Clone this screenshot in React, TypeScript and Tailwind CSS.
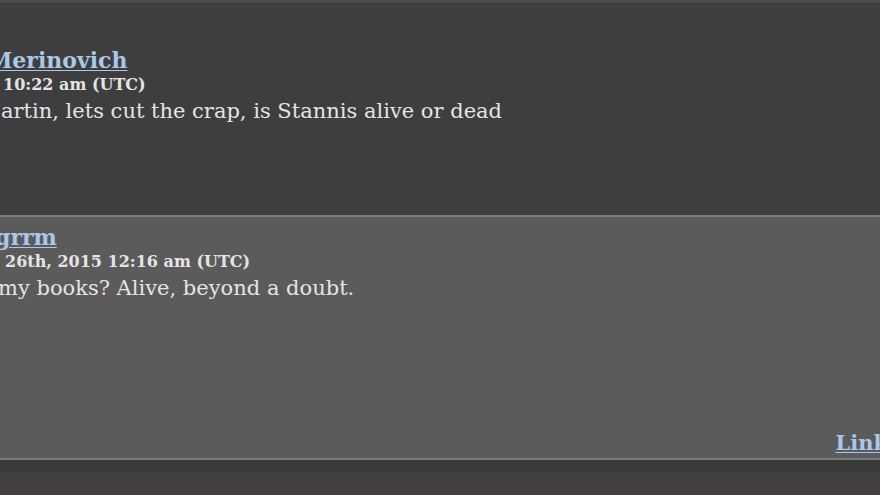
const serif = { fontFamily: '"DejaVu Serif", Georgia, serif' };

type Comment = {
  author: string;
  authorShift: string;
  date: string;
  dateShift: string;
  body: string;
  bodyShift: string;
};

function CommentBody({ c }: { c: Comment }) {
  return (
    <div className="overflow-hidden text-[#e4e4e4]" style={serif}>
      <a
        href="#"
        className={`block whitespace-nowrap text-[22px] font-bold leading-[26px] text-[#a9c8e8] underline decoration-1 underline-offset-2 ${c.authorShift}`}
      >
        {c.author}
      </a>
      <p className={`whitespace-nowrap text-[16px] font-bold leading-[24px] ${c.dateShift}`}>
        {c.date}
      </p>
      <p className={`whitespace-nowrap text-[21px] leading-[28px] ${c.bodyShift}`}>
        {c.body}
      </p>
    </div>
  );
}

export default function App() {
  const first: Comment = {
    author: "Merinovich",
    authorShift: "-ml-[12px]",
    date: "10:22 am (UTC)",
    dateShift: "ml-[3px]",
    body: "artin, lets cut the crap, is Stannis alive or dead",
    bodyShift: "ml-[1px]",
  };
  const second: Comment = {
    author: "grrm",
    authorShift: "-ml-[5px]",
    date: "26th, 2015 12:16 am (UTC)",
    dateShift: "ml-[5px]",
    body: "my books? Alive, beyond a doubt.",
    bodyShift: "-ml-[2px]",
  };

  return (
    <div className="flex h-[495px] w-[880px] flex-col overflow-hidden bg-[#433f3f]">
      {/* first comment */}
      <div className="h-[215px] shrink-0 border-t-[3px] border-[#4a4a4a] bg-[#3e3e3e] pt-[44px]">
        <CommentBody c={first} />
      </div>

      {/* reply */}
      <div className="flex h-[245px] shrink-0 flex-col border-t-[2px] border-b-[2px] border-[#7c7c7c] bg-[#5b5b5b] pt-[7px]">
        <CommentBody c={second} />
        <div className="mt-auto flex justify-end overflow-hidden pb-[2px]">
          <a
            href="#"
            className="-mr-[8px] text-[21px] font-bold leading-[26px] text-[#a9c8e8] underline decoration-1 underline-offset-2"
            style={serif}
          >
            Link
          </a>
        </div>
      </div>

      <div className="h-[12px] shrink-0 bg-[#3a3c3a]" />
    </div>
  );
}
